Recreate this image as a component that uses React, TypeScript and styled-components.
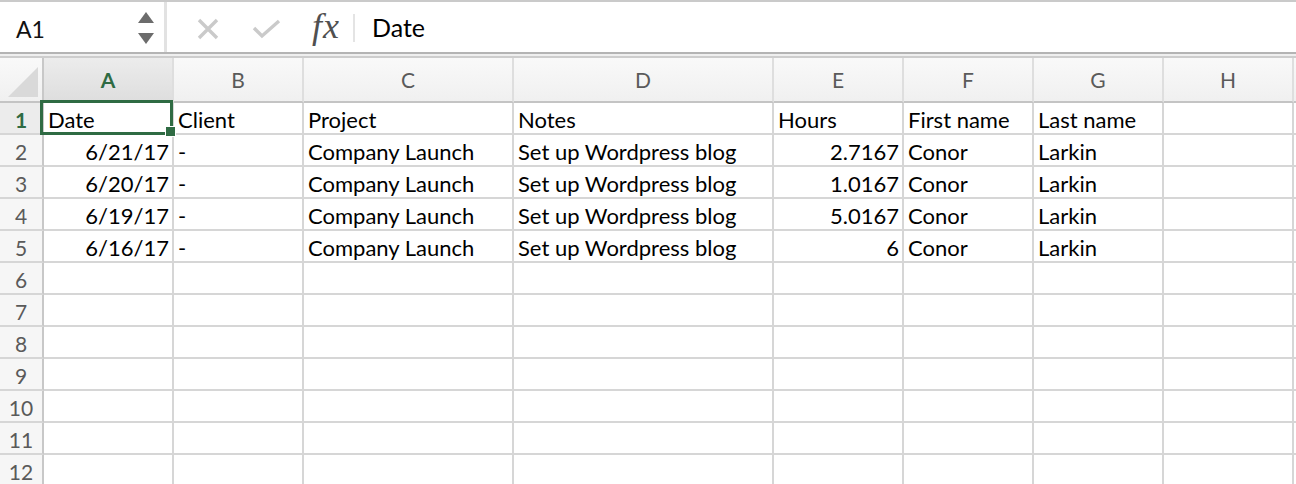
import React from 'react';
import styled, {createGlobalStyle, css} from 'styled-components';

const GREEN = '#2f6b43';
const GRID = '#d6d6d6';
const FONT = `Lato, 'Open Sans', sans-serif`;

const COLUMNS = [
  {key: 'A', width: 130},
  {key: 'B', width: 130},
  {key: 'C', width: 210},
  {key: 'D', width: 260},
  {key: 'E', width: 130},
  {key: 'F', width: 130},
  {key: 'G', width: 130},
  {key: 'H', width: 130},
];

type CellValue = string | number;

const DATA: CellValue[][] = [
  ['Date', 'Client', 'Project', 'Notes', 'Hours', 'First name', 'Last name'],
  ['6/21/17', '-', 'Company Launch', 'Set up Wordpress blog', 2.7167, 'Conor', 'Larkin'],
  ['6/20/17', '-', 'Company Launch', 'Set up Wordpress blog', 1.0167, 'Conor', 'Larkin'],
  ['6/19/17', '-', 'Company Launch', 'Set up Wordpress blog', 5.0167, 'Conor', 'Larkin'],
  ['6/16/17', '-', 'Company Launch', 'Set up Wordpress blog', 6, 'Conor', 'Larkin'],
];

const ROW_COUNT = 12;

// numbers and dates sit on the right of the cell, like in Excel
const isRightAligned = (v: CellValue | undefined) =>
  typeof v === 'number' || (typeof v === 'string' && /^\d+\/\d+\/\d+$/.test(v));

const GlobalStyle = createGlobalStyle`
  html, body {
    margin: 0;
    padding: 0;
    background: #fff;
    overflow: hidden;
  }
  body {
    font-family: ${FONT};
  }
`;

const App: React.FC = () => {
  return (
    <>
      <GlobalStyle />
      <Window>
        <Toolbar>
          <Bar>
            <NameBox>
              <NameText>A1</NameText>
              <Stepper>
                <svg width="16" height="11" viewBox="0 0 16 11">
                  <polygon points="8,0 16,11 0,11" fill="#6c6c6c" />
                </svg>
                <svg width="16" height="11" viewBox="0 0 16 11">
                  <polygon points="0,0 16,0 8,11" fill="#6c6c6c" />
                </svg>
              </Stepper>
            </NameBox>
            <ToolIcon $left={30}>
              <svg width="22" height="22" viewBox="0 0 22 22">
                <path d="M2 2 L20 20 M20 2 L2 20" stroke="#cacaca" strokeWidth="3.4" />
              </svg>
            </ToolIcon>
            <ToolIcon $left={33}>
              <svg width="29" height="20" viewBox="0 0 29 20">
                <polyline
                  points="2,9 10,17 27,2"
                  fill="none"
                  stroke="#cacaca"
                  strokeWidth="3.4"
                />
              </svg>
            </ToolIcon>
            <FxLabel>fx</FxLabel>
            <FormulaDivider />
            <FormulaText>Date</FormulaText>
          </Bar>
        </Toolbar>

        <Sheet>
          <Corner>
            <CornerTriangle />
          </Corner>
          {COLUMNS.map((c) => (
            <ColumnHeader key={c.key} $selected={c.key === 'A'}>
              {c.key}
            </ColumnHeader>
          ))}
          <ColumnHeader />

          {Array.from({length: ROW_COUNT}).map((_, r) => (
            <React.Fragment key={r}>
              <RowHeader $selected={r === 0}>{r + 1}</RowHeader>
              {COLUMNS.map((c, ci) => {
                const value = DATA[r]?.[ci];
                return (
                  <Cell
                    key={c.key}
                    $align={isRightAligned(value) ? 'right' : 'left'}
                    $active={r === 0 && ci === 0}
                  >
                    {value}
                  </Cell>
                );
              })}
              <Cell />
            </React.Fragment>
          ))}
        </Sheet>
      </Window>
    </>
  );
};

const Window = styled.div`
  width: 1296px;
  height: 484px;
  overflow: hidden;
  background: #fff;
`;

const Toolbar = styled.div`
  border-top: 2px solid #cacaca;
  border-bottom: 2px solid #cdcdcd;
  padding-bottom: 2px;
  background: #efefef;
`;

const Bar = styled.div`
  height: 52px;
  box-sizing: border-box;
  display: flex;
  align-items: center;
  background: #fff;
  border-bottom: 2px solid #b4b4b4;
`;

const NameBox = styled.div`
  width: 167px;
  height: 100%;
  box-sizing: border-box;
  display: flex;
  align-items: center;
  justify-content: space-between;
  padding: 0 10px 0 16px;
  border-right: 3px solid #e2e2e2;
`;

const NameText = styled.span`
  font-family: ${FONT};
  font-size: 23px;
  color: #111;
  margin-top: 4px;
`;

const Stepper = styled.div`
  display: flex;
  flex-direction: column;
  gap: 10px;
  margin-top: 2px;
`;

const ToolIcon = styled.span<{$left: number}>`
  display: flex;
  align-items: center;
  margin-left: ${(p) => p.$left}px;
  margin-top: 3px;
`;

const FxLabel = styled.span`
  margin-left: 31px;
  font-family: 'Liberation Serif', 'DejaVu Serif', serif;
  font-style: italic;
  font-size: 36px;
  color: #505050;
  letter-spacing: 1px;
  line-height: 1;
  margin-top: -2px;
`;

const FormulaDivider = styled.div`
  width: 2px;
  height: 28px;
  margin-left: 13px;
  margin-top: 2px;
  background: #e4e4e4;
`;

const FormulaText = styled.span`
  margin-left: 17px;
  font-family: ${FONT};
  font-size: 25px;
  color: #000;
`;

const Sheet = styled.div`
  display: grid;
  grid-template-columns: 44px ${COLUMNS.map((c) => `${c.width}px`).join(' ')} 1fr;
  grid-auto-rows: 32px;
  grid-template-rows: 45px;
`;

const headerBase = css`
  box-sizing: border-box;
  display: flex;
  align-items: center;
  justify-content: center;
  font-family: ${FONT};
  font-size: 21px;
  color: #5a5a5a;
`;

const Corner = styled.div`
  box-sizing: border-box;
  display: flex;
  align-items: flex-end;
  justify-content: flex-end;
  padding: 0 4px 4px 0;
  background: linear-gradient(#f9f9f9, #f0f0f0);
  border-right: 2px solid #c8c8c8;
  border-bottom: 2px solid #c4c4c4;
`;

const CornerTriangle = styled.div`
  width: 30px;
  height: 30px;
  background: #d9d9d9;
  clip-path: polygon(100% 0, 100% 100%, 0 100%);
`;

const ColumnHeader = styled.div<{$selected?: boolean}>`
  ${headerBase};
  background: ${(p) =>
    p.$selected
      ? 'linear-gradient(#ececec, #dedede)'
      : 'linear-gradient(#f9f9f9, #f0f0f0)'};
  border-right: 2px solid #dedede;
  border-bottom: 2px solid #c4c4c4;
  ${(p) =>
    p.$selected &&
    css`
      color: ${GREEN};
      font-weight: 700;
    `}
`;

const RowHeader = styled.div<{$selected?: boolean}>`
  ${headerBase};
  padding-top: 2px;
  background: ${(p) => (p.$selected ? '#ececec' : '#f6f6f6')};
  border-right: 2px solid #c8c8c8;
  border-bottom: 2px solid ${GRID};
  ${(p) =>
    p.$selected &&
    css`
      color: ${GREEN};
      font-weight: 700;
    `}
`;

const Cell = styled.div<{$align?: 'left' | 'right'; $active?: boolean}>`
  position: relative;
  box-sizing: border-box;
  display: flex;
  align-items: center;
  justify-content: ${(p) => (p.$align === 'right' ? 'flex-end' : 'flex-start')};
  padding: 3px 3px 0 4px;
  border-right: 2px solid ${GRID};
  border-bottom: 2px solid ${GRID};
  font-family: ${FONT};
  font-size: 22px;
  color: #000;
  white-space: nowrap;
  overflow: visible;

  ${(p) =>
    p.$active &&
    css`
      &::before {
        content: '';
        position: absolute;
        z-index: 2;
        top: -3px;
        left: -4px;
        right: -1px;
        bottom: -2px;
        border: 3px solid ${GREEN};
        pointer-events: none;
      }
      &::after {
        content: '';
        position: absolute;
        z-index: 3;
        right: -3px;
        bottom: -3px;
        width: 9px;
        height: 9px;
        background: ${GREEN};
        box-shadow: 0 0 0 1px #fff;
      }
    `}
`;

export default App;
